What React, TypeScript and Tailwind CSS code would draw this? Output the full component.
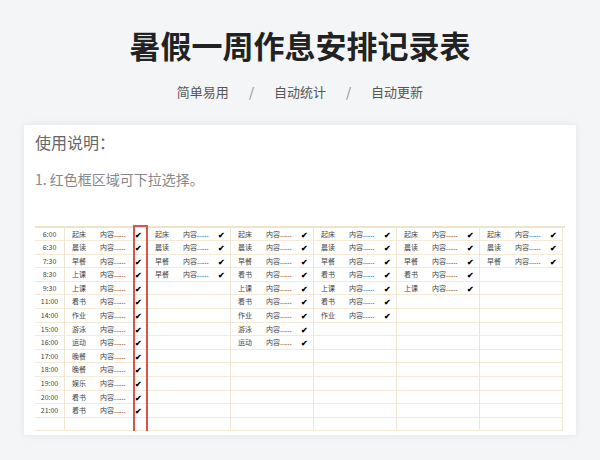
import React from 'react';

const TIMES = ['6:00', '6:30', '7:30', '8:30', '9:30', '11:00', '14:00', '15:00', '16:00', '17:00', '18:00', '19:00', '20:00', '21:00', ''];

const DAYS: string[][] = [
  ['起床', '晨读', '早餐', '上课', '上课', '看书', '作业', '游泳', '运动', '晚餐', '晚餐', '娱乐', '看书', '看书'],
  ['起床', '晨读', '早餐', '早餐'],
  ['起床', '晨读', '早餐', '看书', '上课', '看书', '作业', '游泳', '运动'],
  ['起床', '晨读', '早餐', '看书', '上课', '看书', '作业'],
  ['起床', '晨读', '早餐', '看书', '上课'],
  ['起床', '晨读', '早餐'],
];

const App: React.FC = () => {
  return (
    <div
      className="w-[600px] h-[460px] bg-[#f4f5f7] overflow-hidden flex flex-col items-center"
      style={{ fontFamily: '"Noto Sans CJK SC", "Noto Sans", sans-serif' }}
    >
      <h1 className="mt-[22px] h-[46px] text-[31px] leading-[46px] font-bold text-[#222]">暑假一周作息安排记录表</h1>
      <div className="mt-[14px] flex items-center gap-[20px] text-[13px] text-[#555]">
        <span>简单易用</span>
        <span className="text-[#888]">/</span>
        <span>自动统计</span>
        <span className="text-[#888]">/</span>
        <span>自动更新</span>
      </div>
      <div className="mt-[23px] w-[552px] h-[310px] bg-white shadow-[0_0_8px_rgba(0,0,0,0.08)] px-[11px]">
        <div className="pt-[4px] text-[16px] leading-[26px] text-[#666]">使用说明：</div>
        <div className="mt-[13px] text-[14px] leading-[22px] text-[#888]">1. 红色框区域可下拉选择。</div>
        <div className="mt-[36px] flex border-t-2 border-[#efe3c8] text-[7px] text-[#444]">
          {/* time column */}
          <div className="w-[30px] border-r border-[#f0e6d2]">
            {TIMES.map((t, i) => (
              <div key={i} className="h-[13.6px] leading-[13px] border-b border-[#f3ead8] text-center">
                {t}
              </div>
            ))}
          </div>
          {DAYS.map((day, d) => (
            <div key={d} className="w-[83px] border-r border-[#f0e6d2] relative">
              {TIMES.map((_, i) => (
                <div key={i} className="h-[13.6px] leading-[13px] border-b border-[#f3ead8] flex">
                  {day[i] && (
                    <>
                      <span className="w-[35px] pl-[7px]">{day[i]}</span>
                      <span className="w-[35px]">内容......</span>
                      <span className="w-[11px] text-[8px] font-bold text-black">✔</span>
                    </>
                  )}
                </div>
              ))}
              {d === 0 && (
                <div className="absolute top-[-3px] bottom-0 left-[68px] w-[15px] border-2 border-b-0 border-[#d9534f]" />
              )}
            </div>
          ))}
        </div>
      </div>
    </div>
  );
};

export default App;
